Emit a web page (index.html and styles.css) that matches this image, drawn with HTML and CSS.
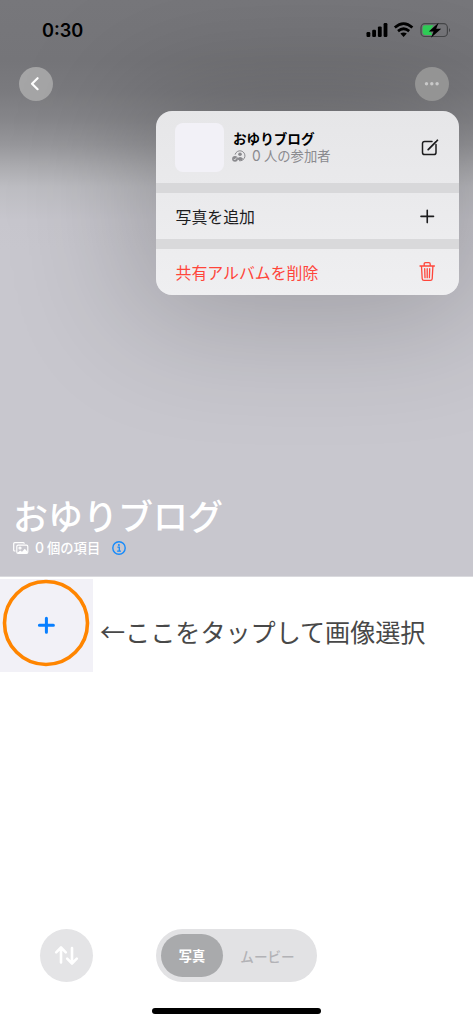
FILE: index.html
```html
<!DOCTYPE html>
<html lang="ja">
<head>
<meta charset="utf-8">
<title>おゆりブログ</title>
<link rel="stylesheet" href="styles.css">
</head>
<body>
<main class="screen">
  <section class="hero">
    <header class="status">
      <span class="time">0:30</span>
      <svg class="status-icons" width="88" height="20" viewBox="0 0 88 20">
        <rect x="1.5" y="12" width="3.8" height="5" rx="1.2"/>
        <rect x="7.2" y="9.7" width="3.8" height="7.3" rx="1.2"/>
        <rect x="12.9" y="6.4" width="3.8" height="10.6" rx="1.2"/>
        <rect x="18.6" y="3" width="3.8" height="14" rx="1.2"/>
        <g fill="none" stroke="#000" stroke-width="2.7">
          <path d="M29.8 7.5Q38.6-.3 47.4 7.5"/>
          <path d="M33 11.1Q38.6 6.4 44.2 11.1"/>
        </g>
        <path d="M35.4 13.6Q38.6 11.2 41.8 13.6L38.6 17Z"/>
        <rect x="56" y="3.7" width="26.4" height="12.8" rx="3.8" fill="none" stroke="#464749" stroke-width="1.2"/>
        <path d="M60 5.3H68.5L65 10.7L67.5 14.9H60Q57.6 14.9 57.6 12.5V7.7Q57.6 5.3 60 5.3Z" fill="#30d158"/>
        <path d="M84 8Q86.2 10.1 84 12.2Z" fill="#464749"/>
        <path d="M73.6 2.8L63.8 11.4H68.6L66 17.8L76.2 8.8H71.2Z"/>
      </svg>
    </header>
    <nav class="nav">
      <button class="round back" aria-label="戻る"><svg width="34" height="34" viewBox="0 0 34 34"><path d="M18.6 11.2L13 16.7L18.6 22.2" fill="none" stroke="#fff" stroke-width="2.2" stroke-linecap="round" stroke-linejoin="round"/></svg></button>
      <button class="round more" aria-label="その他"><svg width="34" height="34" viewBox="0 0 34 34" fill="#c9c9c9"><circle cx="11.5" cy="16.7" r="1.7"/><circle cx="16.8" cy="16.7" r="1.7"/><circle cx="22.1" cy="16.7" r="1.7"/></svg></button>
    </nav>
    <div class="album">
      <h1>おゆりブログ</h1>
      <div class="count">
        <svg width="16" height="13" viewBox="0 0 16 13" fill="none" stroke="#fff" stroke-width="1.2"><path d="M2.5 9H1.8Q.7 9 .7 7.9V1.8Q.7.7 1.8.7H10.2Q11.3.7 11.3 1.8"/><rect x="3.8" y="3.2" width="11" height="8.2" rx="1.3"/><circle cx="7" cy="6" r="1"/><path d="M4.5 10.8L7.2 8.5L9 9.7L11.8 6.8L14.3 9.4V11H4.5Z" fill="#fff" stroke="none"/></svg>
        <span class="zero">0</span><span>個の項目</span>
        <svg class="info" width="14" height="14" viewBox="0 0 14 14" fill="none" stroke="#168bfb"><circle cx="7" cy="7" r="6.2" stroke-width="1.4"/><circle cx="6.9" cy="3.9" r="1" fill="#168bfb" stroke="none"/><path d="M5.4 6.1H7.3V10M5.1 10.2H9" stroke-width="1.3"/></svg>
      </div>
    </div>
    <div class="menu">
      <div class="menu-head">
        <div class="thumb"></div>
        <div class="menu-text">
          <strong>おゆりブログ</strong>
          <div class="people">
            <svg width="14" height="12" viewBox="0 0 14 12"><path d="M3.1 4.6A5 5 0 1 1 7 10.7" fill="none" stroke="#8a8a8e" stroke-width="1"/><circle cx="8" cy="4.3" r="1.8" fill="#8a8a8e"/><path d="M5 8.9Q8 5.1 11.4 8.9Q8 11.6 5 8.9Z" fill="#8a8a8e"/><circle cx="3" cy="8.8" r="2.9" fill="#8a8a8e"/><path d="M1.7 8.9L2.8 10L4.5 7.6" fill="none" stroke="#e8e8ea" stroke-width=".8"/></svg>
            <span class="zero">0</span><span>人の参加者</span>
          </div>
        </div>
        <svg width="20" height="20" viewBox="0 0 20 20" fill="none" stroke="#1c1c1e" stroke-width="1.5" stroke-linecap="round"><path d="M12 4.4H4.7Q2.5 4.4 2.5 6.6V15.4Q2.5 17.6 4.7 17.6H13.8Q16 17.6 16 15.4V7.6"/><path d="M8.2 12.6L16.1 4.6M17 3.7L17.4 3.3" stroke-width="1.8"/></svg>
      </div>
      <div class="menu-item"><span>写真を追加</span><svg width="20" height="20" viewBox="0 0 20 20" fill="none" stroke="#1c1c1e" stroke-width="1.6" stroke-linecap="round"><path d="M3 10.4H15.5M9.25 4.2V16.6"/></svg></div>
      <div class="menu-item danger"><span>共有アルバムを削除</span><svg width="20" height="22" viewBox="0 0 20 22" fill="none" stroke="#ff453a" stroke-width="1.3" stroke-linecap="round" stroke-linejoin="round"><path d="M2 5H16.4M6.2 4.8V3Q6.2 1.7 7.5 1.7H10.9Q12.2 1.7 12.2 3V4.8M3.5 5.2L4.2 17.7Q4.3 19.4 6 19.4H12.4Q14.1 19.4 14.2 17.7L14.9 5.2M6.7 7.7L7 16.7M9.2 7.7V16.7M11.7 7.7L11.4 16.7"/></svg></div>
    </div>
  </section>
  <section class="grid">
    <div class="add">
      <svg width="93" height="93" viewBox="0 0 93 93" fill="none"><circle cx="46" cy="44" r="41.5" stroke="#ff8500" stroke-width="3.6"/><path d="M39.4 46.3H53.4M46.4 39.3V53.3" stroke="#087fff" stroke-width="3" stroke-linecap="round"/></svg>
    </div>
    <p class="note">←ここをタップして画像選択</p>
  </section>
  <footer class="bottom">
    <button class="sort" aria-label="並べ替え"><svg width="53" height="53" viewBox="0 0 53 53" fill="none" stroke="#fff" stroke-width="2.6" stroke-linecap="round" stroke-linejoin="round"><path d="M21 33.5V19M16.2 23.3L21 18.5L25.8 23.3M32 19V33.5M27.2 29.7L32 34.5L36.8 29.7"/></svg></button>
    <div class="tabs"><span class="tab active">写真</span><span class="tab">ムービー</span></div>
  </footer>
  <div class="home"></div>
</main>
</body>
</html>
```
FILE: styles.css
```css
* { box-sizing: border-box; }
body {
  margin: 0;
  background: #fff;
  font-family: "Noto Sans CJK JP", sans-serif;
}
button { padding: 0; border: 0; }
svg { display: block; flex: none; }
.screen {
  width: 473px;
  height: 1024px;
  display: flex;
  flex-direction: column;
  overflow: hidden;
}
.hero {
  position: relative;
  height: 577px;
  overflow: hidden;
  display: flex;
  flex-direction: column;
  background: linear-gradient(#77777b 0, #757579 60px, #7a7a7e 90px, #86868a 120px, #97979b 145px, #acacb0 167px, #bdbdc2 187px, #c7c6cd 220px, #c8c7ce 250px);
  border-bottom: 1px solid #dadade;
}
.status {
  height: 60px;
  padding: 20px 20px 0 42px;
  display: flex;
  justify-content: space-between;
}
.time {
  font: 600 18.2px/20px Inter, sans-serif;
}
.nav {
  padding: 7px 24px 0 19px;
  display: flex;
  justify-content: space-between;
}
.round {
  width: 34px;
  height: 34px;
  border-radius: 50%;
}
.back { background: #a5a5a6; }
.more { background: #949494; position: relative; z-index: 2; }
.album {
  margin-top: auto;
  padding: 0 13px 19px;
  color: #fff;
  position: relative;
  z-index: 2;
}
h1 {
  margin: 0;
  font-size: 35px;
  line-height: 48px;
  font-weight: 500;
}
.count {
  height: 18px;
  display: flex;
  align-items: center;
  font-size: 13.3px;
  line-height: 18px;
  font-weight: 500;
}
.count .zero {
  width: 18px;
  padding-left: 6px;
  font: 500 14px/18px Inter, sans-serif;
}
.info { margin-left: 12px; }
.menu {
  position: absolute;
  top: 111px;
  left: 156px;
  width: 303px;
  height: 184px;
  border-radius: 16px;
  background: linear-gradient(#e6e6e8, #efeff1);
  box-shadow: 0 0 130px 20px rgba(0, 0, 0, .22);
}
.menu-head {
  height: 82px;
  padding: 0 19px;
  border-bottom: 10px solid #d8d8da;
  display: flex;
  align-items: center;
}
.thumb {
  width: 49px;
  height: 49px;
  border-radius: 8px;
  background: #f2f1f7;
}
.menu-text { flex: 1; padding-left: 9px; }
.menu-text strong {
  display: block;
  font-size: 13.6px;
  line-height: 18px;
  font-weight: 700;
}
.people {
  display: flex;
  align-items: center;
  font-size: 13.3px;
  line-height: 18px;
  color: #8a8a8e;
}
.people svg { margin-left: -1px; }
.people .zero {
  width: 18px;
  padding-left: 6px;
  font: 400 13.8px/18px Inter, sans-serif;
}
.menu-item {
  height: 56px;
  padding: 0 21px 0 19.5px;
  border-bottom: 10px solid #d9d9db;
  display: flex;
  align-items: center;
  justify-content: space-between;
  font-size: 15.9px;
  color: #1c1c1e;
}
.danger { height: 46px; border: 0; color: #ff453a; }
.grid {
  padding-top: 2px;
  display: flex;
}
.add { width: 93px; height: 93px; background: #f2f1f7; }
.note {
  margin: 33px 0 0 7px;
  font-size: 25.1px;
  line-height: 38px;
  color: #484848;
  white-space: nowrap;
}
.bottom {
  margin-top: auto;
  height: 53px;
  padding-left: 40px;
  display: flex;
  gap: 63px;
}
.sort { width: 53px; height: 53px; border-radius: 50%; background: #e4e4e6; }
.tabs {
  width: 161px;
  padding: 5px;
  display: flex;
  border-radius: 27px;
  background: #e2e2e4;
}
.tab {
  flex: 1;
  display: flex;
  align-items: center;
  justify-content: center;
  font-size: 13.6px;
  color: #b2b2b6;
  font-weight: 500;
}
.tab.active {
  flex: none;
  width: 62px;
  border-radius: 22px;
  background: #a9aaac;
  color: #fff;
  font-weight: 700;
  font-size: 13.2px;
}
.home {
  width: 169px;
  height: 6px;
  margin: 26px auto 10px;
  border-radius: 3px;
  background: #000;
}
```
